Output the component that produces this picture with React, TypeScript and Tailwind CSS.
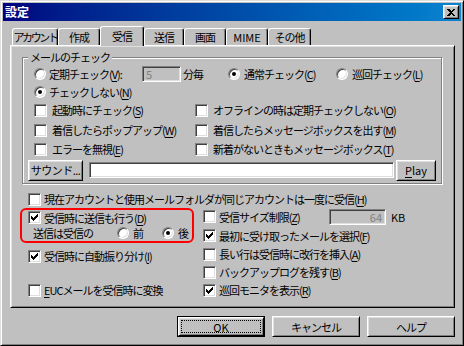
import React from "react";

type Kids = { children?: React.ReactNode };

const raised =
  "border border-t-white border-l-white border-r-black border-b-black shadow-[inset_1px_1px_#dfdfdf,inset_-1px_-1px_#808080]";
const sunken =
  "border border-t-[#808080] border-l-[#808080] border-r-white border-b-white shadow-[inset_1px_1px_#404040,inset_-1px_-1px_#dfdfdf]";

// win9x check mark, one rect per pixel run
const tick = [
  [6, 0, 1],
  [5, 1, 2],
  [0, 2, 1],
  [4, 2, 3],
  [0, 3, 2],
  [3, 3, 3],
  [0, 4, 5],
  [1, 5, 3],
  [2, 6, 1],
];

function U({ children }: Kids) {
  return <span className="underline underline-offset-[2px]">{children}</span>;
}

function CheckBox({ checked = false }: { checked?: boolean }) {
  return (
    <span className={`flex h-[13px] w-[13px] shrink-0 items-center justify-center bg-white ${sunken}`}>
      {checked && (
        <svg width="7" height="7" viewBox="0 0 7 7" shapeRendering="crispEdges">
          {tick.map(([x, y, w]) => (
            <rect key={`${x}-${y}`} x={x} y={y} width={w} height={1} fill="#000" />
          ))}
        </svg>
      )}
    </span>
  );
}

function Radio({ checked = false }: { checked?: boolean }) {
  return (
    <span
      className={`flex h-[12px] w-[12px] shrink-0 items-center justify-center rounded-full bg-white ${sunken}`}
    >
      {checked && <span className="h-[4px] w-[4px] rounded-full bg-black" />}
    </span>
  );
}

function CheckRow({
  checked,
  children,
  className = "",
  gap = "gap-[3px]",
}: Kids & { checked?: boolean; className?: string; gap?: string }) {
  return (
    <div className={`flex items-center ${gap} ${className}`}>
      <CheckBox checked={checked} />
      <span className="whitespace-nowrap">{children}</span>
    </div>
  );
}

function Tab({
  label,
  w,
  active = false,
  tight = false,
}: {
  label: string;
  w: string;
  active?: boolean;
  tight?: boolean;
}) {
  return (
    <div
      className={`flex items-center justify-center whitespace-nowrap rounded-t-[3px] border-t border-l border-t-white border-l-white border-r border-r-black bg-[#c0c0c0] shadow-[inset_-1px_0_#808080] ${w} ${
        active ? "z-10 -mb-px h-[20px] pb-[2px]" : "h-[17px]"
      } ${tight ? "tracking-[-2.4px]" : ""}`}
    >
      {label}
    </div>
  );
}

function Button({ children, w }: Kids & { w: string }) {
  return (
    <div
      className={`flex h-[21px] items-center justify-center whitespace-nowrap bg-[#c0c0c0] ${raised} ${w}`}
    >
      {children}
    </div>
  );
}

export default function App() {
  return (
    <div className="flex h-[346px] w-[464px] flex-col border border-t-[#dfdfdf] border-l-[#dfdfdf] border-r-black border-b-black bg-[#c0c0c0] p-[2px] font-['Noto_Sans_CJK_JP',sans-serif] text-[11px] leading-[14px] tracking-[-1px] text-black shadow-[inset_1px_1px_#fff,inset_-1px_-1px_#808080]">
      {/* title bar */}
      <div className="flex h-[18px] items-center justify-between bg-linear-to-r from-[#000080] to-[#1084d0] px-[2px]">
        <span className="text-[12px] font-bold tracking-normal text-white">設定</span>
        <div className={`flex h-[14px] w-[16px] items-center justify-center bg-[#c0c0c0] ${raised}`}>
          <svg width="8" height="7" viewBox="0 0 8 7" shapeRendering="crispEdges">
            <path d="M0 0h2l2 2 2-2h2L5 3.5 8 7H6L4 5 2 7H0l3-3.5z" fill="#000" />
          </svg>
        </div>
      </div>

      {/* tabs */}
      <div className="relative z-10 mt-[5px] ml-[9px] flex h-[19px] items-end">
        <Tab label="アカウント" w="w-[46px]" tight />
        <Tab label="作成" w="w-[42px]" />
        <Tab label="受信" w="w-[44px]" active />
        <Tab label="送信" w="w-[40px]" />
        <Tab label="画面" w="w-[42px]" />
        <Tab label="MIME" w="w-[42px] tracking-normal" />
        <Tab label="その他" w="w-[43px]" />
      </div>

      {/* tab page */}
      <div className={`ml-[7px] flex h-[263px] w-[445px] flex-col ${raised}`}>
        {/* mail check group */}
        <div className="relative mt-[11px] ml-[11px] flex h-[127px] w-[420px] flex-col border border-[#808080] pt-[7px] pl-[11px] shadow-[inset_1px_1px_#fff,1px_1px_#fff]">
          <span className="absolute -top-[8px] left-[5px] bg-[#c0c0c0] px-[2px]">メールのチェック</span>

          <div className="flex h-[18px] items-center">
            <div className="flex w-[108px] items-center gap-[3px]">
              <Radio />
              <span className="whitespace-nowrap">
                定期チェック(<U>V</U>):
              </span>
            </div>
            <div className={`flex h-[16px] w-[39px] items-center pl-[3px] text-[#808080] ${sunken}`}>5</div>
            <span className="w-[47px] pl-[2px]">分毎</span>
            <div className="flex w-[108px] items-center gap-[4px]">
              <Radio checked />
              <span className="whitespace-nowrap">
                通常チェック(<U>C</U>)
              </span>
            </div>
            <div className="flex items-center gap-[4px]">
              <Radio />
              <span className="whitespace-nowrap">
                巡回チェック(<U>L</U>)
              </span>
            </div>
          </div>

          <div className="flex h-[17px] items-center gap-[3px]">
            <Radio checked />
            <span className="whitespace-nowrap">
              チェックしない(<U>N</U>)
            </span>
          </div>

          <div className="flex h-[20px] items-center">
            <CheckRow className="w-[161px]" gap="gap-[5px]">
              起動時にチェック(<U>S</U>)
            </CheckRow>
            <CheckRow gap="gap-[5px]">
              オフラインの時は定期チェックしない(<U>O</U>)
            </CheckRow>
          </div>
          <div className="flex h-[20px] items-center">
            <CheckRow className="w-[161px]" gap="gap-[5px]">
              着信したらポップアップ(<U>W</U>)
            </CheckRow>
            <CheckRow gap="gap-[5px]">
              着信したらメッセージボックスを出す(<U>M</U>)
            </CheckRow>
          </div>
          <div className="flex h-[18px] items-center">
            <CheckRow className="w-[161px]" gap="gap-[5px]">
              エラーを無視(<U>E</U>)
            </CheckRow>
            <CheckRow gap="gap-[5px]">
              新着がないときもメッセージボックス(<U>T</U>)
            </CheckRow>
          </div>

          <div className="mt-[4px] -ml-[6px] flex h-[16px] items-center">
            <Button w="w-[55px] h-[16px] tracking-[-0.5px]">サウンド...</Button>
            <div className={`ml-[6px] h-[16px] w-[305px] bg-white ${sunken}`} />
            <Button w="ml-[2px] w-[40px] h-[16px] tracking-normal">
              <U>P</U>lay
            </Button>
          </div>
        </div>

        <CheckRow className="mt-[7px] ml-[17px] h-[16px]">
          現在アカウントと使用メールフォルダが同じアカウントは一度に受信(<U>H</U>)
        </CheckRow>

        <div className="flex">
          {/* left column */}
          <div className="ml-[9px] flex w-[174px] flex-col">
            <div className="mt-[1px] flex h-[35px] flex-col rounded-[6px] border-2 border-[#ff0000] pl-[6px]">
              <CheckRow checked className="h-[15px]">
                受信時に送信も行う(<U>D</U>)
              </CheckRow>
              <div className="flex h-[16px] items-center">
                <span className="ml-[5px] w-[84px] whitespace-nowrap">送信は受信の</span>
                <div className="flex w-[45px] items-center gap-[4px]">
                  <Radio />
                  <span>前</span>
                </div>
                <div className="flex items-center gap-[4px]">
                  <Radio checked />
                  <span>後</span>
                </div>
              </div>
            </div>
            <CheckRow checked className="mt-[5px] h-[16px] pl-[8px]">
              受信時に自動振り分け(<U>I</U>)
            </CheckRow>
            <CheckRow className="mt-[18px] h-[16px] pl-[8px]">
              <U>E</U>UCメールを受信時に変換
            </CheckRow>
          </div>

          {/* right column */}
          <div className="ml-[9px] flex flex-col">
            <div className="flex h-[19px] items-center">
              <CheckRow className="w-[126px]">
                受信サイズ制限(<U>Z</U>)
              </CheckRow>
              <div
                className={`flex h-[16px] w-[57px] items-center justify-end pr-[3px] tracking-normal text-[#808080] ${sunken}`}
              >
                64
              </div>
              <span className="ml-[5px] tracking-normal">KB</span>
            </div>
            <CheckRow checked className="h-[19px]">
              最初に受け取ったメールを選択(<U>F</U>)
            </CheckRow>
            <CheckRow className="h-[18px]">
              長い行は受信時に改行を挿入(<U>A</U>)
            </CheckRow>
            <CheckRow className="h-[18px]">
              バックアップログを残す(<U>B</U>)
            </CheckRow>
            <CheckRow checked className="h-[18px]">
              巡回モニタを表示(<U>R</U>)
            </CheckRow>
          </div>
        </div>
      </div>

      {/* dialog buttons */}
      <div className="mt-[8px] mr-[6px] flex justify-end gap-[7px]">
        <div className="h-[21px] w-[88px] border border-black">
          <div className={`flex h-full w-full bg-[#c0c0c0] p-[2px] ${raised}`}>
            <div className="flex h-full w-full items-center justify-center border border-dotted border-black tracking-normal">
              OK
            </div>
          </div>
        </div>
        <Button w="w-[88px]">キャンセル</Button>
        <Button w="w-[88px]">ヘルプ</Button>
      </div>
    </div>
  );
}
